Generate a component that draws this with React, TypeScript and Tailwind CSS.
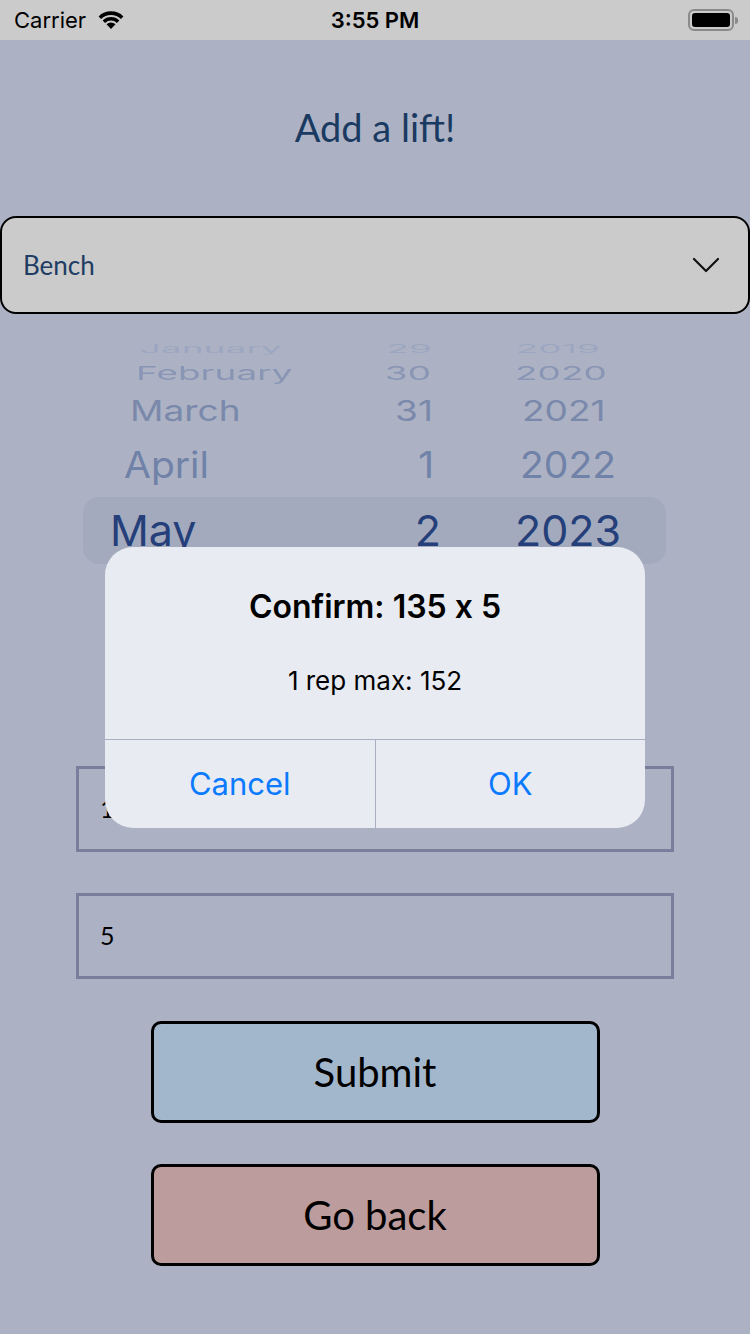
import React from "react";

const sys = { fontFamily: "Inter, 'Liberation Sans', sans-serif" };
const avenir = { fontFamily: "Lato, 'Open Sans', sans-serif" };

// wheel rows, top to bottom; sizes shrink as they rotate away from the centre
const rows = [
  { m: "January", d: "29", y: "2019", h: 18, size: 37, sy: 0.3, color: "text-[#9ca6c0]", mx: 140, dx: 432, yx: 516 },
  { m: "February", d: "30", y: "2020", h: 30, size: 37, sy: 0.5, color: "text-[#8995b4]", mx: 136, dx: 431, yx: 515 },
  { m: "March", d: "31", y: "2021", h: 46, size: 37, sy: 0.76, color: "text-[#7a89ab]", mx: 130, dx: 433, yx: 522 },
  { m: "April", d: "1", y: "2022", h: 62, size: 39, sy: 0.94, color: "text-[#7082a7]", mx: 124, dx: 434, yx: 520 },
  { m: "May", d: "2", y: "2023", h: 68, size: 43, sy: 1, color: "text-[#253f7a]", mx: 110, dx: 441, yx: 515 },
];

function Wifi() {
  return (
    <svg width="30" height="22" viewBox="0 0 30 22">
      <path d="M15 21 L10.5 16.2 A6.6 6.6 0 0 1 19.5 16.2 Z" fill="#000" />
      <path d="M6.6 12.4 A12 12 0 0 1 23.4 12.4 L20.9 15 A8.5 8.5 0 0 0 9.1 15 Z" fill="#000" />
      <path d="M2.6 8.4 A17.6 17.6 0 0 1 27.4 8.4 L24.9 11 A14 14 0 0 0 5.1 11 Z" fill="#000" />
    </svg>
  );
}

function Battery() {
  return (
    <div className="flex items-center">
      <div className="w-[46px] h-[22px] rounded-[6px] border-2 border-[#8a8a8a] p-[2px]">
        <div className="w-full h-full rounded-[3px] bg-black" />
      </div>
      <div className="w-[3px] h-[7px] rounded-r-sm bg-[#8a8a8a] ml-[1px]" />
    </div>
  );
}

export default function App() {
  return (
    <div className="relative w-[750px] h-[1334px] bg-[#acb2c4] overflow-hidden">
      {/* status bar */}
      <div className="h-[40px] bg-[#cbcbcb] flex items-center px-[14px] relative" style={sys}>
        <span className="text-[22px] text-black">Carrier</span>
        <span className="ml-[10px] mt-[-2px]"><Wifi /></span>
        <span className="absolute left-0 right-0 text-center text-[22px] font-semibold text-black pointer-events-none">3:55 PM</span>
        <span className="ml-auto mr-[-2px]"><Battery /></span>
      </div>

      {/* title */}
      <div className="h-[176px] pt-[63px] text-center" style={avenir}>
        <h1 className="text-[38px] leading-[48px] font-normal text-[#1a3a62]">Add a lift!</h1>
      </div>

      {/* exercise dropdown */}
      <div className="h-[98px] bg-[#cbcbcb] border-2 border-black rounded-[16px] flex items-center pl-[21px] pr-[28px]" style={avenir}>
        <span className="text-[26px] text-[#1f3c63]">Bench</span>
        <svg className="ml-auto" width="28" height="16" viewBox="0 0 28 16">
          <path d="M2 2 L14 14 L26 2" fill="none" stroke="#111" strokeWidth="2.2" strokeLinecap="round" strokeLinejoin="round" />
        </svg>
      </div>

      {/* date wheel */}
      <div className="relative mt-[26px] h-[426px]" style={sys}>
        <div className="absolute left-[83px] top-[157px] w-[583px] h-[67px] rounded-[16px] bg-[#a4aabd]" />
        <div className="relative">
          {rows.map((r, i) => (
            <div key={i} className="relative" style={{ height: r.h }}>
              <div
                className={`absolute inset-0 flex items-center ${r.color}`}
                style={{ fontSize: r.size, transform: `scaleY(${r.sy})` }}
              >
                <span className="absolute" style={{ left: r.mx }}>{r.m}</span>
                <span className="absolute text-right" style={{ right: 750 - r.dx }}>{r.d}</span>
                <span className="absolute" style={{ left: r.yx }}>{r.y}</span>
              </div>
            </div>
          ))}
        </div>
      </div>

      {/* weight / reps fields */}
      <div className="flex flex-col items-center gap-[41px]" style={avenir}>
        <div className="w-[598px] h-[86px] border-[3px] border-[#7b7e9b] flex items-center pl-[21px] text-[25px] text-black">135</div>
        <div className="w-[598px] h-[86px] border-[3px] border-[#7b7e9b] flex items-center pl-[21px] text-[25px] text-black">5</div>
        <button className="w-[449px] h-[102px] mt-[1px] bg-[#a2b7cc] border-[3px] border-black rounded-[10px] text-[40px] font-normal text-black">Submit</button>
        <button className="w-[449px] h-[102px] bg-[#bc9c9d] border-[3px] border-black rounded-[10px] text-[40px] font-normal text-black">Go back</button>
      </div>

      {/* confirm alert */}
      <div className="absolute left-[105px] top-[547px] w-[540px] h-[281px] rounded-[28px] bg-[#e8ebf2] flex flex-col overflow-hidden [font-feature-settings:'calt'_0]" style={sys}>
        <div className="flex-1 flex flex-col items-center">
          <div className="mt-[40px] text-[32px] leading-[40px] font-semibold text-black">Confirm: 135 x 5</div>
          <div className="mt-[38px] text-[26px] leading-[32px] text-black">1 rep max: 152</div>
        </div>
        <div className="h-[89px] border-t border-[#a9afc0] flex">
          <div className="flex-1 flex items-center justify-center text-[31px] text-[#0a7aff] border-r border-[#a9afc0]">Cancel</div>
          <div className="flex-1 flex items-center justify-center text-[31px] text-[#0a7aff]">OK</div>
        </div>
      </div>
    </div>
  );
}
